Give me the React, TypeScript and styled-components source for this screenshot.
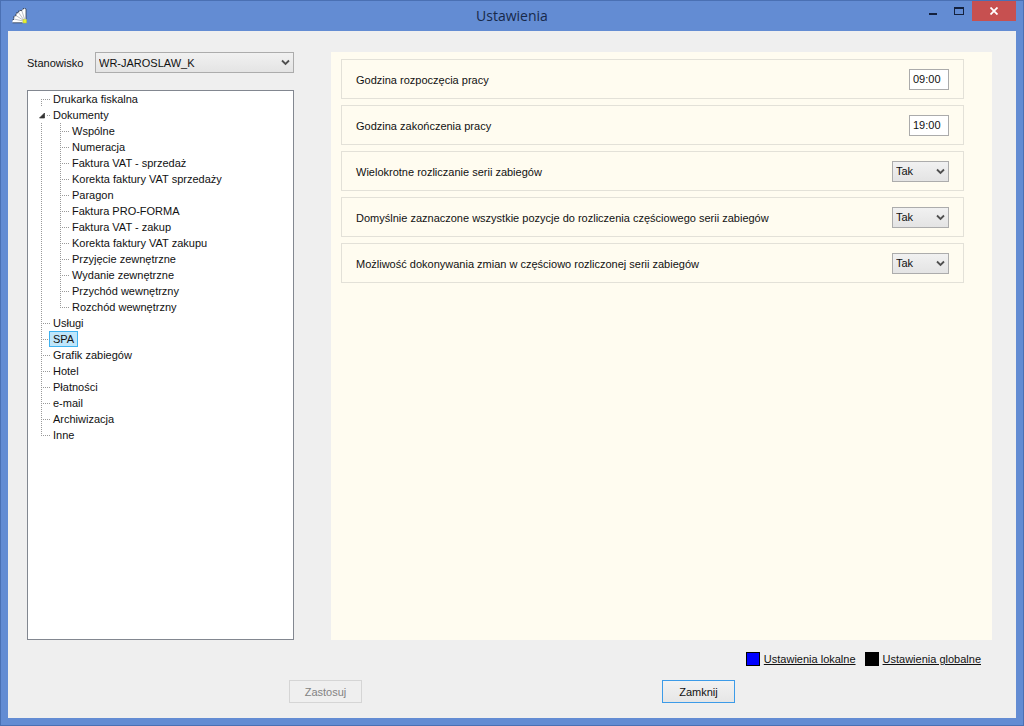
import React, { useState } from 'react';
import styled, { createGlobalStyle, css } from 'styled-components';

const GlobalStyle = createGlobalStyle`
  *, *::before, *::after { box-sizing: border-box; }
  body {
    margin: 0;
    font-family: "Liberation Sans", Arial, sans-serif;
    font-size: 11px;
    line-height: 14px;
    color: #111;
  }
  button, input, select { font: inherit; color: inherit; margin: 0; }
  ul { list-style: none; margin: 0; padding: 0; }
`;

const Window = styled.div`
  min-height: 100vh;
  display: flex;
  flex-direction: column;
  padding: 0 7px 7px;
  background: #638cd3;
  border: 1px solid #4a70b3;
`;

const TitleBar = styled.header`
  display: grid;
  grid-template-columns: 1fr auto 1fr;
  align-items: start;
  height: 30px;
`;

const AppIcon = styled.svg`
  width: 16px;
  height: 16px;
  margin: 7px 0 0 4px;
`;

const Title = styled.h1`
  margin: 5px 0 0;
  font-family: "Open Sans", "Noto Sans", sans-serif;
  font-size: 14px;
  line-height: 20px;
  font-weight: 400;
  color: #17294a;
`;

const Controls = styled.div`
  display: flex;
  justify-content: flex-end;
`;

const ControlButton = styled.button<{ $close?: boolean }>`
  width: ${p => (p.$close ? 44 : 26)}px;
  height: 20px;
  padding: 0;
  border: 0;
  display: flex;
  align-items: center;
  justify-content: center;
  background: ${p => (p.$close ? '#c75050' : 'transparent')};
  color: ${p => (p.$close ? '#fff' : '#14213d')};
`;

const Client = styled.main`
  flex: 1;
  display: flex;
  flex-direction: column;
  padding: 21px 24px 15px 19px;
  background: #efefef;
`;

const Columns = styled.div`
  flex: 1;
  display: grid;
  grid-template-columns: 267px minmax(0, 1fr);
  gap: 37px;
`;

const Sidebar = styled.div`
  display: flex;
  flex-direction: column;
  gap: 17px;
`;

const StationRow = styled.div`
  display: grid;
  grid-template-columns: 68px 1fr;
  align-items: center;
`;

const SelectBox = styled.span<{ $width?: number }>`
  display: grid;
  align-items: center;
  ${p => p.$width && css`width: ${p.$width}px;`}

  select, svg { grid-area: 1 / 1; }
  svg { justify-self: end; margin-right: 4px; pointer-events: none; }
`;

const NativeSelect = styled.select`
  appearance: none;
  width: 100%;
  height: 21px;
  padding: 0 18px 0 3px;
  border: 1px solid #acacac;
  border-radius: 0;
  background: linear-gradient(#f1f1f1, #e4e4e4);
`;

const TreeBox = styled.nav`
  flex: 1;
  padding: 0 0 0 13px;
  background: #fff;
  border: 1px solid #828790;
`;

const dotsDown = 'repeating-linear-gradient(to bottom, #9a9a9a 0 1px, transparent 1px 2px)';
const dotsAcross = 'repeating-linear-gradient(to right, #9a9a9a 0 1px, transparent 1px 2px)';

const TreeItem = styled.li`
  background-image: ${dotsDown}, ${dotsAcross};
  background-repeat: no-repeat;
  background-size: 1px 100%, 9px 1px;
  background-position: 0 0, 0 8px;

  &:last-child { background-size: 1px 8px, 9px 1px; }
`;

const TreeRoot = styled.ul`
  & > ${TreeItem}:first-child { background-position: 0 8px, 0 8px; }
`;

const TreeBranch = styled.ul`
  margin-left: 19px;
`;

const TreeRow = styled.div`
  display: flex;
  height: 16px;
  padding-left: 8px;
`;

const Expander = styled.button`
  width: 10px;
  height: 16px;
  margin: 0 2px 0 -12px;
  padding: 0;
  border: 0;
  background: #fff;
  display: flex;
  align-items: center;
  justify-content: center;
`;

const TreeLabel = styled.button<{ $selected: boolean }>`
  height: 16px;
  padding: 0 3px;
  line-height: 14px;
  white-space: nowrap;
  border: 1px solid ${p => (p.$selected ? '#3fb2f0' : 'transparent')};
  background: ${p => (p.$selected ? '#bfe6fb' : '#fff')};
  background-clip: padding-box;
`;

const Panel = styled.section`
  display: flex;
  flex-direction: column;
  gap: 6px;
  padding: 7px 28px 7px 10px;
  background: #fffcf0;
`;

const SettingRow = styled.div`
  display: flex;
  align-items: center;
  justify-content: space-between;
  height: 40px;
  padding: 0 14px;
  border: 1px solid #e3e1d8;
`;

const SettingLabel = styled.label`
  padding-top: 2px;
`;

const TimeInput = styled.input`
  width: 40px;
  height: 21px;
  padding: 0 3px;
  background: #fff;
  border: 1px solid #ababab;
  border-radius: 0;
`;

const Legend = styled.div`
  display: flex;
  justify-content: flex-end;
  gap: 9px;
  padding: 12px 11px 14px 0;
`;

const LegendLink = styled.a`
  display: flex;
  align-items: center;
  gap: 4px;
  color: inherit;
  text-decoration: none;

  span { text-decoration: underline; }
`;

const Swatch = styled.i<{ $color: string }>`
  width: 14px;
  height: 14px;
  background: ${p => p.$color};
  border: 1px solid #000;
`;

const Actions = styled.footer`
  display: flex;
  justify-content: center;
  gap: 300px;
  padding-left: 5px;
`;

const ActionButton = styled.button`
  width: 73px;
  height: 23px;
  padding: 0;
  border: 1px solid #3c9be8;
  background: linear-gradient(#f2f2f2, #e6e6e6);

  &:disabled {
    color: #838383;
    border-color: #d5d5d5;
    background: #efefef;
  }
`;

type Setting = { id: string; label: string; time?: string };

const settings: Setting[] = [
  { id: 'start', label: 'Godzina rozpoczęcia pracy', time: '09:00' },
  { id: 'end', label: 'Godzina zakończenia pracy', time: '19:00' },
  { id: 'multi', label: 'Wielokrotne rozliczanie serii zabiegów' },
  { id: 'all', label: 'Domyślnie zaznaczone wszystkie pozycje do rozliczenia częściowego serii zabiegów' },
  { id: 'edit', label: 'Możliwość dokonywania zmian w częściowo rozliczonej serii zabiegów' },
];

type Node = { name: string; children?: string[] };

const tree: Node[] = [
  { name: 'Drukarka fiskalna' },
  {
    name: 'Dokumenty',
    children: [
      'Wspólne',
      'Numeracja',
      'Faktura VAT - sprzedaż',
      'Korekta faktury VAT sprzedaży',
      'Paragon',
      'Faktura PRO-FORMA',
      'Faktura VAT - zakup',
      'Korekta faktury VAT zakupu',
      'Przyjęcie zewnętrzne',
      'Wydanie zewnętrzne',
      'Przychód wewnętrzny',
      'Rozchód wewnętrzny',
    ],
  },
  { name: 'Usługi' },
  { name: 'SPA' },
  { name: 'Grafik zabiegów' },
  { name: 'Hotel' },
  { name: 'Płatności' },
  { name: 'e-mail' },
  { name: 'Archiwizacja' },
  { name: 'Inne' },
];

function Dropdown({ id, options, width }: { id: string; options: string[]; width?: number }) {
  return (
    <SelectBox $width={width}>
      <NativeSelect id={id}>
        {options.map(o => <option key={o}>{o}</option>)}
      </NativeSelect>
      <svg width="9" height="7" viewBox="0 0 9 7" aria-hidden="true">
        <path d="M1 1.5 4.5 5 8 1.5" fill="none" stroke="#505050" strokeWidth="1.8" />
      </svg>
    </SelectBox>
  );
}

function Tree() {
  const [selected, setSelected] = useState('SPA');
  const [open, setOpen] = useState(true);
  const label = (name: string) => (
    <TreeLabel type="button" $selected={selected === name} onClick={() => setSelected(name)}>
      {name}
    </TreeLabel>
  );
  return (
    <TreeBox aria-label="Kategorie">
      <TreeRoot>
        {tree.map(node => (
          <TreeItem key={node.name}>
            <TreeRow>
              {node.children && (
                <Expander type="button" aria-label={node.name} aria-expanded={open} onClick={() => setOpen(!open)}>
                  <svg width="7" height="7" viewBox="0 0 7 7" aria-hidden="true">
                    <path d={open ? 'M5.5 1v5h-5z' : 'M1.5 .5l4 3-4 3z'} fill={open ? '#333' : '#fff'} stroke="#333" strokeWidth=".7" />
                  </svg>
                </Expander>
              )}
              {label(node.name)}
            </TreeRow>
            {node.children && open && (
              <TreeBranch>
                {node.children.map(child => (
                  <TreeItem key={child}>
                    <TreeRow>{label(child)}</TreeRow>
                  </TreeItem>
                ))}
              </TreeBranch>
            )}
          </TreeItem>
        ))}
      </TreeRoot>
    </TreeBox>
  );
}

export default function App() {
  return (
    <>
      <GlobalStyle />
      <Window>
        <TitleBar>
          <AppIcon viewBox="0 0 16 16" aria-hidden="true">
            <path d="M.5 14.8V12L2 11 1.8 8.6 4 7.6 4 5.2 6.6 4.6 7.2 2.4 9.8 2.6 11 .8 14 .6V14.8z" fill="#fff" />
            <path d="M.5 12 2 11 1.8 8.6 4 7.6 4 5.2 6.6 4.6 7.2 2.4 9.8 2.6 11 .8 14 .6" fill="none" stroke="#17202f" strokeWidth=".9" strokeDasharray="2 1" />
            <path d="M11 13 2 11M11 12 4 7.6M11.5 11.5 6.6 4.6M12.5 11 9.8 2.6" fill="none" stroke="#8d949e" strokeWidth=".6" />
            <path d="M.5 14.8H10.5M14 1v10" fill="none" stroke="#303c50" strokeWidth=".8" />
            <path d="M11 11.5h3.5v3.5H11z" fill="#e8f032" stroke="#b9c22a" strokeWidth=".5" />
          </AppIcon>
          <Title>Ustawienia</Title>
          <Controls>
            <ControlButton type="button" aria-label="Minimalizuj">
              <svg width="8" height="8" viewBox="0 0 8 8"><path d="M0 6h8v2H0z" fill="currentColor" /></svg>
            </ControlButton>
            <ControlButton type="button" aria-label="Maksymalizuj">
              <svg width="10" height="8" viewBox="0 0 10 8">
                <path d="M0 0h10v8H0zM1 2v5h8V2z" fill="currentColor" fillRule="evenodd" />
              </svg>
            </ControlButton>
            <ControlButton type="button" $close aria-label="Zamknij okno">
              <svg width="8" height="8" viewBox="0 0 8 8">
                <path d="M.5 .5l7 7M7.5 .5l-7 7" stroke="currentColor" strokeWidth="1.8" />
              </svg>
            </ControlButton>
          </Controls>
        </TitleBar>
        <Client>
          <Columns>
            <Sidebar>
              <StationRow>
                <label htmlFor="station">Stanowisko</label>
                <Dropdown id="station" options={['WR-JAROSLAW_K']} />
              </StationRow>
              <Tree />
            </Sidebar>
            <Panel>
              {settings.map(s => (
                <SettingRow key={s.id}>
                  <SettingLabel htmlFor={s.id}>{s.label}</SettingLabel>
                  {s.time ? (
                    <TimeInput id={s.id} type="text" defaultValue={s.time} />
                  ) : (
                    <Dropdown id={s.id} width={57} options={['Tak', 'Nie']} />
                  )}
                </SettingRow>
              ))}
            </Panel>
          </Columns>
          <Legend>
            <LegendLink href="#lokalne"><Swatch $color="#0000ff" /><span>Ustawienia lokalne</span></LegendLink>
            <LegendLink href="#globalne"><Swatch $color="#000" /><span>Ustawienia globalne</span></LegendLink>
          </Legend>
          <Actions>
            <ActionButton type="button" disabled>Zastosuj</ActionButton>
            <ActionButton type="button">Zamknij</ActionButton>
          </Actions>
        </Client>
      </Window>
    </>
  );
}
